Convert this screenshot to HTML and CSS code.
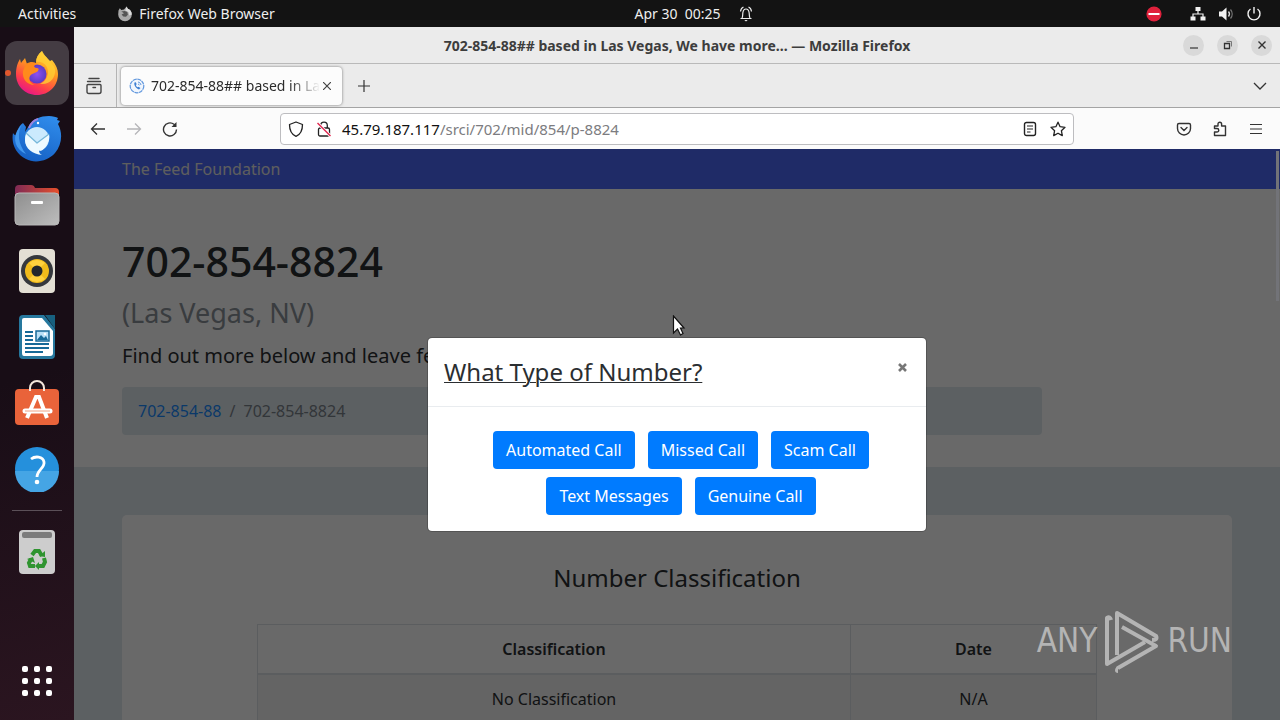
FILE: index.html
```html
<!DOCTYPE html>
<html lang="en">
<head>
<meta charset="utf-8">
<title>702-854-88## based in Las Vegas</title>
<link rel="stylesheet" href="styles.css">
</head>
<body>
<div class="desktop">
  <header class="topbar">
    <div class="topbar-left">
      <button class="top-btn">Activities</button>
      <button class="top-btn top-app">
        <svg width="16" height="16" viewBox="0 0 16 16"><path d="M1.500 4.500 2.800 2.200 4.300 4 7 3.400 9.600.6l1.200 2.200c2.300.8 4 2.800 4 5.700A6.700 6.700 0 0 1 8 15.300 6.800 6.800 0 0 1 1.200 8.500z" fill="#a9a9a9"/><path d="M9.600.6 8.300 4.600l3 1.500 1 3.400 2.500-1c0-2.900-1.700-4.900-4-5.700z" fill="#dcdcdc"/><path d="m4.300 5.500 3.400-.6 2.600 1.200.6 2.700-1.900 2-2.700-.3-1.700-1.900 2.400-1.400z" fill="#555"/></svg>
        Firefox Web Browser
      </button>
    </div>
    <div class="clock">
      <button class="top-btn">Apr 30&nbsp; 00:25</button>
      <svg width="16" height="16" viewBox="0 0 16 16" fill="none" stroke="#eee" stroke-width="1.200"><path d="M2.500 12.500h11M4 12c1-1.500.5-3.500.9-5.500C5.300 4 6.500 3 8 3s2.700 1 3.100 3.500c.4 2-.1 4 .9 5.500M2.500 5.500C2.800 3 3.700 1.700 5.500 1M13.500 5.500C13.200 3 12.300 1.700 10.500 1"/><path d="M6.300 14h3.400L8 15.600z" fill="#eee" stroke="none"/></svg>
    </div>
    <div class="topbar-right">
      <svg class="dnd" width="16" height="16" viewBox="0 0 16 16"><circle cx="8" cy="8" r="7.600" fill="#e0213c"/><path d="M2.500 8h11" stroke="#fff" stroke-width="2"/></svg>
      <svg width="16" height="16" viewBox="0 0 16 16" fill="#f2f2f2"><path d="M5.500 1h5v4h-5zM.5 10.500h5v4h-5zM10.500 10.500h5v4h-5z"/><path d="M8 5v3M3 11V8h10v3" fill="none" stroke="#f2f2f2" stroke-width="1.200"/></svg>
      <svg width="16" height="16" viewBox="0 0 16 16"><path d="M1 5.500h3L8.500 1.500v13L4 10.500H1z" fill="#f2f2f2"/><path d="M10.500 5.500a4 4 0 0 1 0 5" fill="none" stroke="#ddd" stroke-width="1.300"/><path d="M12.500 3.500a7 7 0 0 1 0 9" fill="none" stroke="#777" stroke-width="1.300"/></svg>
      <svg width="16" height="16" viewBox="0 0 16 16" fill="none" stroke="#f2f2f2" stroke-width="1.400"><path d="M4.500 3a6 6 0 1 0 7 0M8 1v6.500"/></svg>
    </div>
  </header>

  <nav class="dock" aria-label="Dock">
    <button class="dock-item active" aria-label="Firefox">
      <svg width="44" height="46" viewBox="0 0 44 46">
        <defs>
          <linearGradient id="ff" x1=".8" y1="0" x2=".3" y2="1"><stop offset="0" stop-color="#ffe63f"/><stop offset=".4" stop-color="#ff9a1f"/><stop offset=".75" stop-color="#ff3d4b"/><stop offset="1" stop-color="#e5168a"/></linearGradient>
          <radialGradient id="fp"><stop offset="0" stop-color="#9050f0"/><stop offset="1" stop-color="#5b3bc4"/></radialGradient>
        </defs>
        <path d="M1 24C1 17 3 12 5 9l1 4c1-2 3-3 4-5l2 6 9-1c0-5 2-9 6-12 1 4 4 5 6 8l2 2 2-1c4 5 6 9 6 14 0 12-9 21-21 21S1 36 1 24z" fill="url(#ff)"/>
        <circle cx="22" cy="24" r="9.500" fill="url(#fp)"/>
        <path d="M11 14c5-3 9-2 11 0-3 1-4 3-1 4 3 0 3 1 2 3-2 2-6 2-8 5-2 4 1 8 5 9-9 0-13-7-12-14z" fill="#ff8a1c"/>
        <path d="M21 12c7-1 12 3 12 11-1 6-4 9-8 11 11 1 16-7 15-15-2-6-8-9-13-18-4 3-6 7-6 11z" fill="#ffce35" opacity=".8"/>
      </svg>
    </button>
    <button class="dock-item" aria-label="Thunderbird">
      <svg width="50" height="48" viewBox="0 0 50 48">
        <defs><linearGradient id="tb" x1=".7" y1="0" x2=".3" y2="1"><stop offset="0" stop-color="#2f8bea"/><stop offset="1" stop-color="#1560c4"/></linearGradient></defs>
        <path d="M1 18c2 3 3 3 4-1 1-4 3-7 6-9l3 4-1 5 5-8C22 4 28 1 37 1c4 0 7 1 9 2l-1 2 3 1-2 3c5 9 4 21-3 29-7 8-20 11-29 6C4 39-1 29 1 18z" fill="url(#tb)"/>
        <path d="M10 9c-5 9-4 20 4 30C3 34 1 24 5 16z" fill="#4298ee"/>
        <circle cx="25" cy="24" r="12" fill="#cbeafd"/>
        <path d="m14 18 11 11 12-10c1 4 0 7-2 10-2 5-6 8-8 6 0 3 1 4 3 5-9-1-17-6-17-15z" fill="#eefaff"/>
        <path d="m14 18 11 10 12-9" fill="none" stroke="#78b8d8" stroke-width="1.300"/>
        <path d="M17 13c2-5 5-8 9-9" fill="none" stroke="#9b83dd" stroke-width="2"/>
        <circle cx="26" cy="8" r="1.200" fill="#fff"/>
      </svg>
    </button>
    <button class="dock-item" aria-label="Files">
      <svg width="46" height="42" viewBox="0 0 46 42">
        <defs><linearGradient id="fo"><stop offset="0" stop-color="#7f2a55"/><stop offset="1" stop-color="#e6502c"/></linearGradient><linearGradient id="fg" x1="0" y1="0" x2="1" y2="1"><stop offset="0" stop-color="#8e8e8e"/><stop offset="1" stop-color="#bdbdbd"/></linearGradient></defs>
        <path d="M1 5q0-4 4-4h12q3 0 4 3h20q4 0 4 4v12H1z" fill="url(#fo)"/><rect x="1" y="9" width="44" height="32" rx="4" fill="url(#fg)" stroke="#b8b8b8"/><rect x="17" y="17" width="12" height="3" rx="1" fill="#fff"/>
      </svg>
    </button>
    <button class="dock-item" aria-label="Rhythmbox">
      <svg width="38" height="46" viewBox="0 0 38 46"><rect x="1" y="1" width="36" height="44" rx="4" fill="#e3dfd4"/><circle cx="19" cy="23" r="16" fill="#35383d"/><circle cx="19" cy="23" r="12" fill="#f1bb1b"/><path d="M11 15a12 12 0 0 1 16 0L19 23zM11 31a12 12 0 0 0 16 0L19 23z" fill="#ffd13e"/><circle cx="19" cy="23" r="5.500" fill="#23272d"/></svg>
    </button>
    <button class="dock-item" aria-label="LibreOffice Writer">
      <svg width="38" height="46" viewBox="0 0 38 46"><path d="M5 1h21l11 14v26q0 4-4 4H5q-4 0-4-4V5q0-4 4-4z" fill="#26789e"/><path d="M27 1h10v14z" fill="#17607f"/><path d="M6 4h18l11 13v22q0 3-3 3H6q-2 0-2-3V6q0-2 2-2z" fill="#fff"/><path d="M7 18h8M7 22h8M7 26h8M7 30h24M7 34h24M7 38h18" stroke="#176a98" stroke-width="2"/><rect x="18" y="17" width="13" height="10" fill="#b9e0f7" stroke="#176a98" stroke-width="1.500"/><path d="m19 26 4-5 3 3 2-2 2 4z" fill="#176a98"/><circle cx="27" cy="20" r="1.300" fill="#fff"/></svg>
    </button>
    <button class="dock-item" aria-label="Ubuntu Software">
      <svg width="46" height="46" viewBox="0 0 46 46"><rect x="1" y="9" width="44" height="36" rx="4" fill="#e9633a"/><path d="M16 11V8a7 7 0 0 1 14 0v3" fill="none" stroke="#f4e7dc" stroke-width="2"/><path d="M13 38 22 17h3l8 21" fill="none" stroke="#fff" stroke-width="4"/><path d="M11 31h25" stroke="#fff" stroke-width="5" stroke-linecap="round"/><path d="M11 31h25" stroke="#f0a184" stroke-width="1"/></svg>
    </button>
    <button class="dock-item" aria-label="Help">
      <svg width="46" height="46" viewBox="0 0 46 46"><circle cx="23" cy="23" r="22" fill="#2590dc"/><path d="M1 25a22 22 0 0 0 44 0z" fill="#45a5e5"/><path d="M17 13c4-3 12-3 13 3 1 6-7 8-7 15" fill="none" stroke="#fff" stroke-width="2.800"/><circle cx="23" cy="36" r="2.300" fill="#fff"/></svg>
    </button>
    <hr class="dock-sep">
    <button class="dock-item" aria-label="Trash">
      <svg width="38" height="46" viewBox="0 0 38 46"><rect x="1" y="1" width="36" height="44" rx="4" fill="#cdcdcd"/><rect x="4" y="3" width="30" height="6" rx="2" fill="#7c7c7c"/><g fill="none" stroke="#2f9430" stroke-width="4"><path d="m14 26 3-4h4l3 5M26 29l1 4-2 4h-4M17 37h-5l-1-3 2-4"/></g><path d="m21 27 6 1 0-6zM21 33v8l-4-4zM9 30l6-2 2 6z" fill="#2f9430"/></svg>
    </button>
    <button class="dock-item dock-apps" aria-label="Show applications">
      <svg width="32" height="32" viewBox="0 0 32 32" fill="#fff"><rect x="1" y="1" width="6" height="6" rx="2"/><rect x="13" y="1" width="6" height="6" rx="2"/><rect x="25" y="1" width="6" height="6" rx="2"/><rect x="1" y="13" width="6" height="6" rx="2"/><rect x="13" y="13" width="6" height="6" rx="2"/><rect x="25" y="13" width="6" height="6" rx="2"/><rect x="1" y="25" width="6" height="6" rx="2"/><rect x="13" y="25" width="6" height="6" rx="2"/><rect x="25" y="25" width="6" height="6" rx="2"/></svg>
    </button>
  </nav>

  <main class="window">
    <div class="titlebar">
      <div class="window-title">702-854-88## based in Las Vegas, We have more... — Mozilla Firefox</div>
      <div class="window-controls">
        <button class="round" aria-label="Minimize"><svg width="10" height="10" viewBox="0 0 10 10"><path d="M1 8h8" stroke="#333" stroke-width="1.200"/></svg></button>
        <button class="round" aria-label="Restore"><svg width="10" height="10" viewBox="0 0 10 10" fill="none" stroke="#333"><path d="M1.500 3.500h5v5h-5z" stroke-width="1.300"/><path d="M3.500 1.500h5v5" stroke="#777"/></svg></button>
        <button class="round" aria-label="Close"><svg width="10" height="10" viewBox="0 0 10 10"><path d="m1.500 1.500 7 7m0-7-7 7" stroke="#333" stroke-width="1.400"/></svg></button>
      </div>
    </div>

    <div class="tabbar">
      <button class="tool view" aria-label="View tabs"><svg width="18" height="18" viewBox="0 0 18 18" fill="none" stroke="#444" stroke-width="1.400" stroke-linecap="round"><path d="M4 1.500h10M2.500 4.500h13M3 7.500h12q1 0 1 1v6q0 2-2 2H4q-2 0-2-2v-6q0-1 1-1zM8 10.500h2.500"/></svg></button>
      <div class="tab">
        <svg class="favicon" width="16" height="16" viewBox="0 0 16 16"><circle cx="8" cy="8" r="6.800" fill="#f1f6fd" stroke="#5f96dd" stroke-width="1.200" stroke-dasharray="4 .6"/><path d="M5.500 4.500c-1 2.500 1.500 6 4.500 7l1.500-1.500-2-1.300-.9.6C7.500 8.500 7 7.800 6.900 7l.8-.8-.9-2z" fill="#3f80d2"/><path d="M9 4c1.500.2 2.700 1.300 3 3M9 6c.8.2 1.200.6 1.300 1.300" fill="none" stroke="#5f96dd"/></svg>
        <span class="tab-title">702-854-88## based in La</span>
        <button class="tab-close" aria-label="Close tab"><svg width="8" height="8" viewBox="0 0 8 8"><path d="m0 0 8 8m0-8L0 8" stroke="#444" stroke-width="1.200"/></svg></button>
      </div>
      <button class="tool" aria-label="New tab"><svg width="14" height="14" viewBox="0 0 14 14"><path d="M7 1v12M1 7h12" stroke="#333" stroke-width="1.200"/></svg></button>
      <button class="tool tabs-list" aria-label="List all tabs"><svg width="14" height="14" viewBox="0 0 14 14"><path d="m1 4 6 6 6-6" fill="none" stroke="#333" stroke-width="1.300"/></svg></button>
    </div>

    <div class="toolbar">
      <button class="tool" aria-label="Back"><svg width="16" height="16" viewBox="0 0 16 16" fill="none" stroke="#333" stroke-width="1.300"><path d="M15 8H1.500M7 2.500 1.500 8 7 13.500"/></svg></button>
      <button class="tool" aria-label="Forward"><svg width="16" height="16" viewBox="0 0 16 16" fill="none" stroke="#b5b5b8" stroke-width="1.300"><path d="M1 8h13.500M9 2.500 14.500 8 9 13.500"/></svg></button>
      <button class="tool" aria-label="Reload"><svg width="16" height="16" viewBox="0 0 16 16" fill="none" stroke="#333" stroke-width="1.400"><path d="M14.500 8.500A6.500 6.500 0 1 1 12 3.300l1.500 1.400"/><path d="M14.500 1v5h-5z" fill="#333" stroke="none"/></svg></button>
      <div class="urlbar">
        <button class="tool" aria-label="Tracking protection"><svg width="16" height="16" viewBox="0 0 16 16" fill="none" stroke="#222" stroke-width="1.300"><path d="m8 1 6.500 2.500c0 6-2 10-6.500 11.800C3.500 13.500 1.500 9.500 1.500 3.500z" stroke-linejoin="round"/></svg></button>
        <button class="tool" aria-label="Connection is not secure"><svg width="16" height="16" viewBox="0 0 16 16" fill="none" stroke="#222" stroke-width="1.300"><rect x="2.500" y="7" width="11" height="8" rx="1.500"/><path d="M4.700 7V4.500a3.300 3.300 0 0 1 6.600 0V7"/><path d="m1.500 2 13 13" stroke="#fff" stroke-width="3"/><path d="m1.500 2 13 13" stroke="#e22850" stroke-width="1.400"/></svg></button>
        <a class="url" href="#"><span class="host">45.79.187.117</span>/srci/702/mid/854/p-8824</a>
        <button class="tool" aria-label="Reader view"><svg width="14" height="16" viewBox="0 0 14 16" fill="none" stroke="#222" stroke-width="1.400"><rect x="1.500" y="1.500" width="11" height="13" rx="2"/><path d="M4 5h6M4 8h6M4 11h3.500" stroke-width="1.200"/></svg></button>
        <button class="tool" aria-label="Bookmark"><svg width="16" height="16" viewBox="0 0 16 16" fill="none" stroke="#222" stroke-width="1.300" stroke-linejoin="round"><path d="m8 1.200 2.100 4.500 4.900.6-3.600 3.400.9 4.900L8 12.200l-4.300 2.400.9-4.900L1 6.300l4.900-.6z"/></svg></button>
      </div>
      <button class="tool" aria-label="Pocket"><svg width="16" height="16" viewBox="0 0 16 16" fill="none" stroke="#333" stroke-width="1.400" stroke-linecap="round"><path d="M3 2.500h10q1.500 0 1.500 1.500v3.500a6.500 6.500 0 0 1-13 0V4q0-1.500 1.500-1.500zM5 6.500l3 3 3-3"/></svg></button>
      <button class="tool" aria-label="Extensions"><svg width="16" height="16" viewBox="0 0 16 16" fill="none" stroke="#333" stroke-width="1.400" stroke-linejoin="round"><path d="M2.500 7.500V5H6V3a1.800 1.800 0 0 1 3.600 0v2h3.900v9.500h-11V11H5a1.700 1.700 0 0 0 0-3.500z"/></svg></button>
      <button class="tool" aria-label="Menu"><svg width="14" height="14" viewBox="0 0 14 14"><path d="M1 2.500h12M1 7h12M1 11.500h12" stroke="#333" stroke-width="1.200"/></svg></button>
    </div>

    <div class="viewport">
      <div class="page">
        <nav class="navbar"><a href="#">The Feed Foundation</a></nav>
        <section class="jumbotron">
          <h1>702-854-8824</h1>
          <p class="place">(Las Vegas, NV)</p>
          <p class="lead">Find out more below and leave feedback.</p>
          <ol class="breadcrumb"><li><a href="#">702-854-88</a></li><li>702-854-8824</li></ol>
        </section>
        <section class="card">
          <h2>Number Classification</h2>
          <table class="table">
            <thead><tr><th class="wide">Classification</th><th>Date</th></tr></thead>
            <tbody><tr><td>No Classification</td><td>N/A</td></tr></tbody>
          </table>
        </section>
      </div>
      <div class="backdrop">
        <div class="modal" role="dialog" aria-labelledby="modal-title">
          <div class="modal-header">
            <h2 class="modal-title" id="modal-title">What Type of Number?</h2>
            <button class="modal-close" aria-label="Close"><svg width="9" height="9" viewBox="0 0 9 9"><path d="m1 1 7 7m0-7L1 8" stroke="#777" stroke-width="2.600"/></svg></button>
          </div>
          <div class="modal-body">
            <button class="btn">Automated Call</button>
            <button class="btn">Missed Call</button>
            <button class="btn">Scam Call</button>
            <button class="btn">Text Messages</button>
            <button class="btn">Genuine Call</button>
          </div>
        </div>
      </div>
      <div class="scrollbar"></div>
      <div class="watermark">
        <span>ANY</span>
        <svg width="56" height="64" viewBox="0 0 56 64" fill="none" stroke="#b4b4b4" stroke-width="4" stroke-linejoin="round"><path d="M7 11q-1-4-4-2v46l38-22"/><path d="M13 46V4l39 23q2 4-4 4"/><path d="m18 18 34 19-38 22q-2 3 0 3"/></svg>
        <span>RUN</span>
      </div>
    </div>
  </main>
  <svg class="cursor" width="14" height="22" viewBox="0 0 14 22"><path d="M1.500 1v17l4-4 3 6 2.500-1.500L8.500 13H12z" fill="#fff" stroke="#111" stroke-width="1.200"/></svg>
</div>
</body>
</html>
```
FILE: styles.css
```css
* { box-sizing: border-box; }
body { margin: 0; font-family: "Noto Sans", "Open Sans", sans-serif; font-size: 14px; }
button { font: inherit; color: inherit; border: 0; background: none; padding: 0; }
svg { display: block; flex: none; }
h1, h2, p, ol { margin: 0; padding: 0; font-weight: 400; }
a { text-decoration: none; color: inherit; }

.desktop {
  position: relative;
  display: grid;
  grid-template: 27px minmax(0, 1fr) / 74px minmax(0, 1fr);
  height: 100vh;
  overflow: hidden;
}

/* Top panel */
.topbar {
  grid-column: 1 / -1;
  display: grid;
  grid-template-columns: 1fr auto 1fr;
  align-items: center;
  padding: 0 18px;
  background: #131313;
  color: #eee;
}
.topbar-left, .topbar-right, .clock, .top-app { display: flex; align-items: center; }
.topbar-left { gap: 41px; }
.top-app { gap: 6px; }
.clock { gap: 17px; padding-left: 108px; }
.topbar-right { justify-content: flex-end; gap: 12px; }
.dnd { margin-right: 16px; }

/* Dock */
.dock {
  display: flex;
  flex-direction: column;
  align-items: center;
  gap: 2px;
  padding: 14px 5px 7px;
  background: linear-gradient(165deg, #180d16 50%, #2b1520);
}
.dock-item {
  position: relative;
  width: 64px;
  height: 64px;
  display: grid;
  place-items: center;
  border-radius: 12px;
}
.dock-item.active { background: #443c43; }
.dock-item.active::before {
  content: "";
  position: absolute;
  left: 0;
  top: 29px;
  width: 6px;
  height: 6px;
  border-radius: 50%;
  background: #e2572d;
}
.dock-sep { width: 50px; height: 1px; margin: 7px 0; border: 0; background: #5b5058; }
.dock-apps { margin-top: auto; }

/* Browser window */
.window { display: flex; flex-direction: column; min-width: 0; }
.titlebar {
  display: grid;
  grid-template-columns: 90px 1fr 90px;
  align-items: center;
  height: 37px;
  padding: 0 8px;
  background: #ebebeb;
  border-bottom: 1px solid #b9b9b9;
}
.window-title { grid-column: 2; text-align: center; font-weight: 700; color: #3d3d3d; white-space: nowrap; }
.window-controls { display: flex; gap: 13px; justify-content: flex-end; }
.round { width: 21px; height: 21px; border-radius: 50%; background: #d9d9d9; display: grid; place-items: center; }

.tabbar {
  display: flex;
  align-items: center;
  height: 44px;
  padding-right: 6px;
  background: #ebebeb;
  border-bottom: 1px solid #a4a4a4;
}
.tool { width: 28px; height: 28px; display: grid; place-items: center; flex: none; }
.view { width: 43px; height: 100%; padding-right: 2px; border-right: 1px solid #b4b4b4; }
.tab {
  display: flex;
  align-items: center;
  gap: 6px;
  width: 221px;
  height: 38px;
  margin: 0 8px 0 4px;
  padding: 0 8px;
  background: #fcfcfc;
  border-radius: 4px;
  box-shadow: 0 0 3px rgba(0, 0, 0, .5);
  color: #2b2b2b;
}
.tab-title {
  flex: 1;
  white-space: nowrap;
  -webkit-mask-image: linear-gradient(90deg, #000 82%, transparent);
  mask-image: linear-gradient(90deg, #000 82%, transparent);
}
.tab-close { width: 18px; height: 24px; display: grid; place-items: center; margin-left: -6px; }
.tabs-list { margin-left: auto; }

.toolbar {
  display: flex;
  align-items: center;
  gap: 8px;
  height: 41px;
  padding: 0 10px;
  background: #fbfbfb;
}
.urlbar {
  flex: 1;
  display: flex;
  align-items: center;
  height: 32px;
  margin: 0 calc(7% + 5px);
  padding: 0 1px;
  border: 1px solid #bdbdc0;
  border-radius: 4px;
  background: #fff;
}
.url { flex: 1; padding-left: 4px; font-size: 15px; color: #7c7c80; white-space: nowrap; }
.host { color: #111; }

/* Page */
.viewport {
  position: relative;
  flex: 1;
  min-height: 0;
  overflow: hidden;
  font-size: 16px;
  line-height: 24px;
  color: #2b2e31;
  background: #e0e9ee;
}
.navbar { height: 40px; padding: 8px 48px; background: #4c69fa; color: #e4e4e4; }
.jumbotron { background: #fff; padding: 48px 48px 32px; }
h1 { font-size: 41px; line-height: 48px; font-weight: 500; margin-bottom: 8px; }
.place { font-size: 27px; line-height: 40px; color: #8a9299; margin-bottom: 8px; }
.lead { font-size: 20px; line-height: 30px; margin-bottom: 16px; }
.breadcrumb {
  display: flex;
  gap: 8px;
  width: calc(100% * 10 / 12 - 5px);
  padding: 12px 16px;
  border-radius: 4px;
  background: #e0e9ee;
  list-style: none;
  color: #7a838b;
}
.breadcrumb a { color: #1a8cff; }
.breadcrumb li + li::before { content: "/"; padding-right: 8px; }
.card { margin: 48px; padding: 48px; background: #fff; border-radius: 5px; }
.card h2 { font-size: 24px; line-height: 29px; text-align: center; margin-bottom: 32px; }
.table {
  width: calc(100% * 10 / 12 - 5px);
  margin: 0 auto;
  border-collapse: collapse;
  table-layout: fixed;
  text-align: center;
}
.table th, .table td { padding: 12px; border: 1px solid #dee2e6; }
.table th { font-weight: 600; border-bottom-width: 2px; }
.table .wide { width: 593px; }
.table tbody tr { background: #f2f2f2; }
.scrollbar { position: absolute; top: 2px; right: 1px; width: 3px; height: 150px; background: #727378; }

/* Dialog */
.backdrop {
  position: absolute;
  inset: 0;
  display: grid;
  place-items: center;
  background: rgba(0, 0, 0, .588);
}
.modal { width: 500px; background: #fff; background-clip: padding-box; border: 1px solid rgba(0, 0, 0, .2); border-radius: 5px; }
.modal-header {
  display: flex;
  justify-content: space-between;
  align-items: flex-start;
  padding: 16px;
  border-bottom: 1px solid #e9ecef;
}
.modal-title { font-size: 24px; line-height: 36px; text-decoration: underline; text-decoration-thickness: 1px; }
.modal-close { width: 16px; height: 26px; display: grid; place-items: center; }
.modal-body { display: flex; flex-wrap: wrap; justify-content: center; gap: 8px 13px; padding: 24px 16px 16px 24px; }
.btn { padding: 7px 13px; border-radius: 4px; background: #007bff; color: #fff; }

.watermark {
  position: absolute;
  right: 48px;
  bottom: 47px;
  display: flex;
  align-items: center;
  gap: 7px;
  color: #b4b4b4;
  font-family: "Liberation Sans Narrow", "DejaVu Sans Condensed", sans-serif;
  font-size: 33px;
  line-height: 64px;
}
.cursor { position: absolute; left: 672px; top: 315px; }
```
